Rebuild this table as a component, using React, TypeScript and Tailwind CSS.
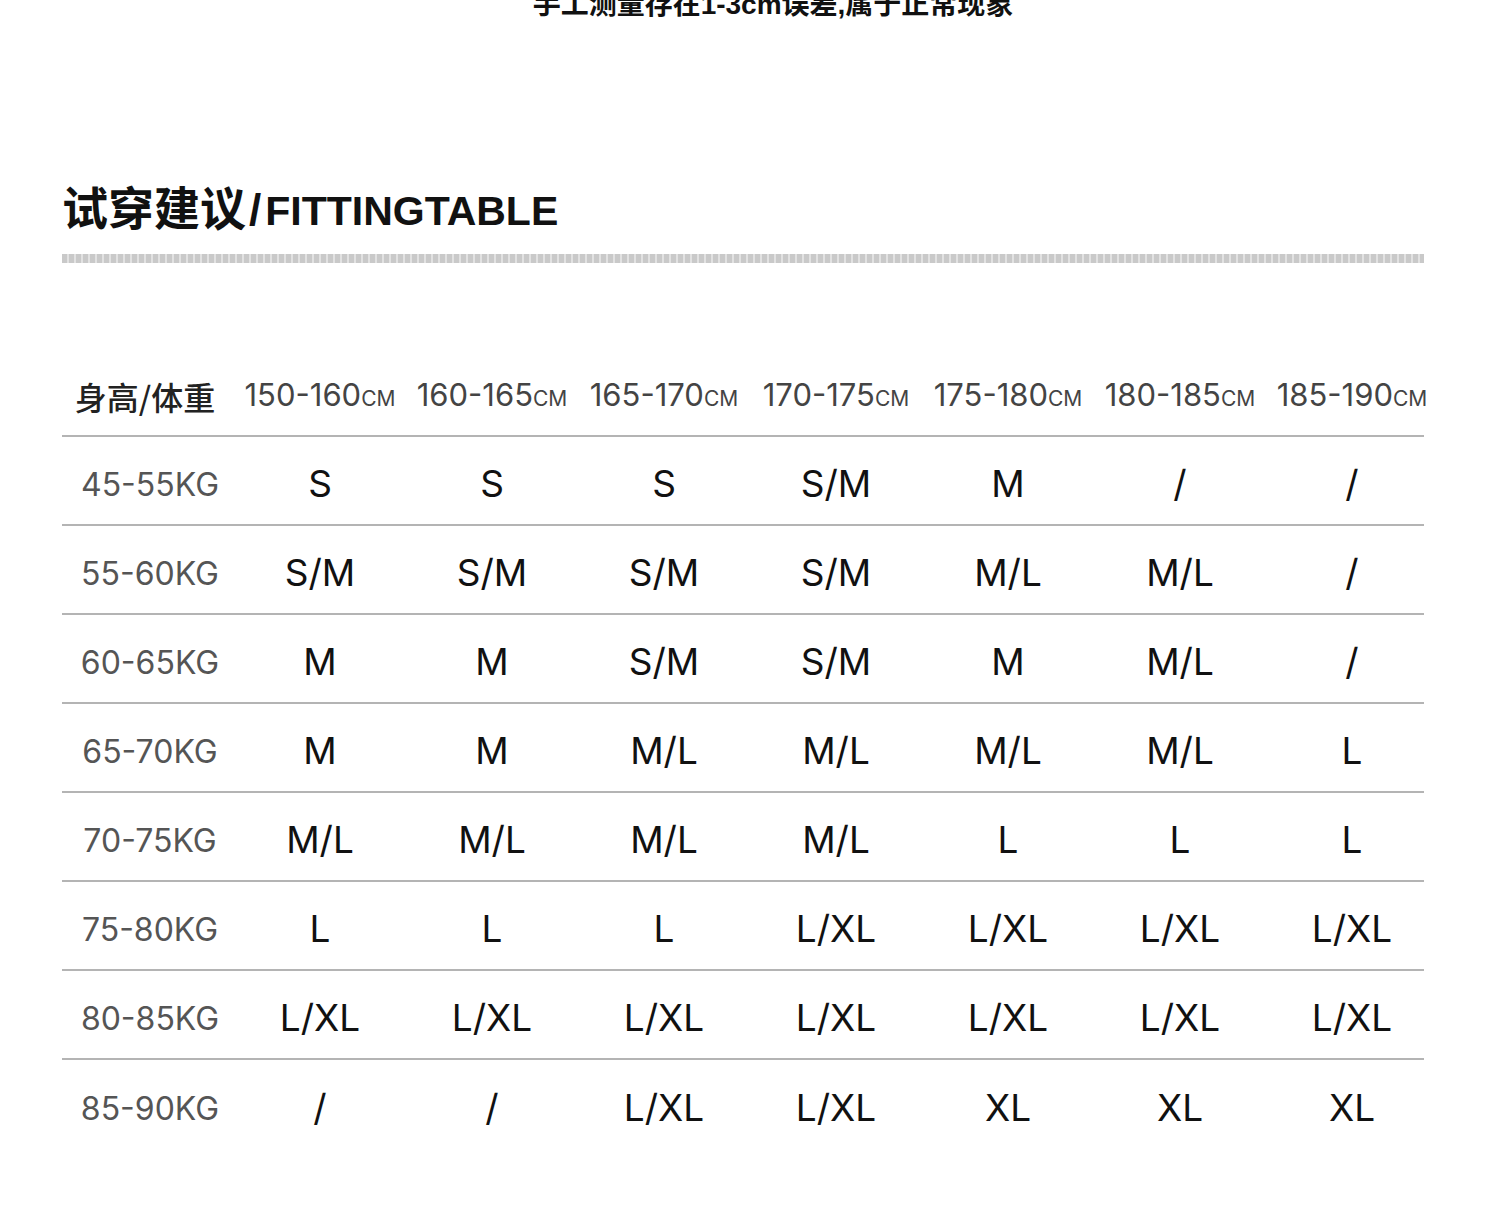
const heights = ["150-160", "160-165", "165-170", "170-175", "175-180", "180-185", "185-190"];

const rows: { weight: string; sizes: string[] }[] = [
  { weight: "45-55KG", sizes: ["S", "S", "S", "S/M", "M", "/", "/"] },
  { weight: "55-60KG", sizes: ["S/M", "S/M", "S/M", "S/M", "M/L", "M/L", "/"] },
  { weight: "60-65KG", sizes: ["M", "M", "S/M", "S/M", "M", "M/L", "/"] },
  { weight: "65-70KG", sizes: ["M", "M", "M/L", "M/L", "M/L", "M/L", "L"] },
  { weight: "70-75KG", sizes: ["M/L", "M/L", "M/L", "M/L", "L", "L", "L"] },
  { weight: "75-80KG", sizes: ["L", "L", "L", "L/XL", "L/XL", "L/XL", "L/XL"] },
  { weight: "80-85KG", sizes: ["L/XL", "L/XL", "L/XL", "L/XL", "L/XL", "L/XL", "L/XL"] },
  { weight: "85-90KG", sizes: ["/", "/", "L/XL", "L/XL", "XL", "XL", "XL"] },
];

export default function App() {
  return (
    <div className="w-[1500px] h-[1205px] bg-white overflow-hidden font-['Inter','Noto_Sans_CJK_SC',sans-serif]">
      {/* note cut off at the top */}
      <div className="h-[22px] overflow-hidden flex justify-center">
        <p className="-mt-[9px] text-[28px] leading-none font-bold text-[#111] font-['Liberation_Sans','Noto_Sans_CJK_SC',sans-serif] pl-[46px] whitespace-nowrap">
          手工测量存在1-3cm误差,属于正常现象
        </p>
      </div>

      <div className="pl-[62px] w-[1424px]">
        <h1 className="mt-[164px] leading-none font-bold text-[#111] font-['Liberation_Sans','Noto_Sans_CJK_SC',sans-serif] whitespace-nowrap">
          <span className="text-[46px]">试穿建议</span>
          <span className="text-[44px] ml-[3px] mr-[4px]">/</span>
          <span className="text-[41px]">FITTINGTABLE</span>
        </h1>
        <div className="mt-[22px] h-[9px] bg-[repeating-linear-gradient(90deg,#c9c9c9_0_5px,#e2e2e2_5px_7px)]" />

        {/* fitting table */}
        <div className="mt-[90px]">
          <div className="h-[84px] border-b-2 border-[#b4b4b4] grid grid-cols-[172px_repeat(7,172px)] items-center pt-[3px]">
            <div className="text-center text-[32px] font-medium text-[#222] font-['Noto_Sans_CJK_SC',sans-serif] -ml-[6px]">身高/体重</div>
            {heights.map((h) => (
              <div key={h} className="text-center text-[31px] text-[#444] whitespace-nowrap">
                {h}
                <span className="text-[21px]">CM</span>
              </div>
            ))}
          </div>

          {rows.map((r, i) => (
            <div
              key={r.weight}
              className={`h-[89px] grid grid-cols-[172px_repeat(7,172px)] items-center ${
                i < rows.length - 1 ? "border-b-2 border-[#b4b4b4]" : ""
              }`}
            >
              <div className="text-center text-[32px] text-[#555] pt-[8px] pl-[4px]">{r.weight}</div>
              {r.sizes.map((s, j) => (
                <div key={j} className="text-center text-[37px] text-[#111] pt-[6px]">
                  {s}
                </div>
              ))}
            </div>
          ))}
        </div>
      </div>
    </div>
  );
}
